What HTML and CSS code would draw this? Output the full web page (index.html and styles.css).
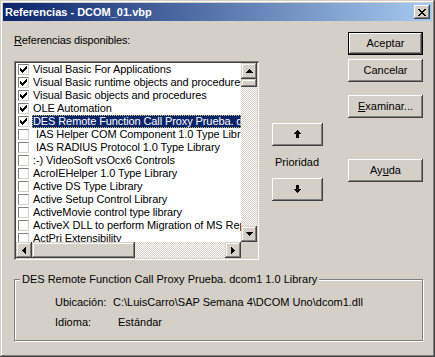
FILE: index.html
```html
<!DOCTYPE html>
<html>
<head>
<meta charset="utf-8">
<link rel="stylesheet" href="styles.css">
</head>
<body>
<div class="window">
  <div class="titlebar">
    <span class="title">Referencias - DCOM_01.vbp</span>
    <span class="close"><svg width="8" height="7" viewBox="0 0 8 7" shape-rendering="crispEdges"><path d="M0 0h2v1h-2zM6 0h2v1h-2zM1 1h2v1h-2zM5 1h2v1h-2zM2 2h4v1h-4zM3 3h2v1h-2zM2 4h4v1h-4zM1 5h2v1h-2zM5 5h2v1h-2zM0 6h2v1h-2zM6 6h2v1h-2z" fill="#000"/></svg></span>
  </div>
  <div class="body">
    <div class="main">
      <div class="left">
        <div class="label"><u>R</u>eferencias disponibles:</div>
        <div class="listbox">
          <div class="items">
            <div class="item"><span class="cb"><svg width="7" height="7" viewBox="0 0 7 7" shape-rendering="crispEdges"><path d="M6 0h1v3h-1zM5 1h1v3h-1zM4 2h1v3h-1zM0 2h1v3h-1zM1 3h1v3h-1zM2 4h1v3h-1zM3 3h1v3h-1z" fill="#000"/></svg></span><span class="txt">Visual Basic For Applications</span></div>
            <div class="item"><span class="cb"><svg width="7" height="7" viewBox="0 0 7 7" shape-rendering="crispEdges"><path d="M6 0h1v3h-1zM5 1h1v3h-1zM4 2h1v3h-1zM0 2h1v3h-1zM1 3h1v3h-1zM2 4h1v3h-1zM3 3h1v3h-1z" fill="#000"/></svg></span><span class="txt">Visual Basic runtime objects and procedures</span></div>
            <div class="item"><span class="cb"><svg width="7" height="7" viewBox="0 0 7 7" shape-rendering="crispEdges"><path d="M6 0h1v3h-1zM5 1h1v3h-1zM4 2h1v3h-1zM0 2h1v3h-1zM1 3h1v3h-1zM2 4h1v3h-1zM3 3h1v3h-1z" fill="#000"/></svg></span><span class="txt">Visual Basic objects and procedures</span></div>
            <div class="item"><span class="cb"><svg width="7" height="7" viewBox="0 0 7 7" shape-rendering="crispEdges"><path d="M6 0h1v3h-1zM5 1h1v3h-1zM4 2h1v3h-1zM0 2h1v3h-1zM1 3h1v3h-1zM2 4h1v3h-1zM3 3h1v3h-1z" fill="#000"/></svg></span><span class="txt">OLE Automation</span></div>
            <div class="item sel"><span class="cb"><svg width="7" height="7" viewBox="0 0 7 7" shape-rendering="crispEdges"><path d="M6 0h1v3h-1zM5 1h1v3h-1zM4 2h1v3h-1zM0 2h1v3h-1zM1 3h1v3h-1zM2 4h1v3h-1zM3 3h1v3h-1z" fill="#000"/></svg></span><span class="txt">DES Remote Function Call Proxy Prueba. dcom1 1.0 Library</span></div>
            <div class="item"><span class="cb"></span><span class="txt"> IAS Helper COM Component 1.0 Type Library</span></div>
            <div class="item"><span class="cb"></span><span class="txt"> IAS RADIUS Protocol 1.0 Type Library</span></div>
            <div class="item"><span class="cb"></span><span class="txt">:-) VideoSoft vsOcx6 Controls</span></div>
            <div class="item"><span class="cb"></span><span class="txt">AcroIEHelper 1.0 Type Library</span></div>
            <div class="item"><span class="cb"></span><span class="txt">Active DS Type Library</span></div>
            <div class="item"><span class="cb"></span><span class="txt">Active Setup Control Library</span></div>
            <div class="item"><span class="cb"></span><span class="txt">ActiveMovie control type library</span></div>
            <div class="item"><span class="cb"></span><span class="txt">ActiveX DLL to perform Migration of MS Repository</span></div>
            <div class="item"><span class="cb"></span><span class="txt">ActPri Extensibility</span></div>
            <div class="item"><span class="cb"></span><span class="txt">Adobe Acrobat Browser Control Type Library</span></div>
          </div>
          <div class="vscroll">
            <div class="sbtn"><svg width="7" height="4" viewBox="0 0 7 4" shape-rendering="crispEdges"><path d="M3 0h1v1h-1zM2 1h3v1h-3zM1 2h5v1h-5zM0 3h7v1h-7z" fill="#000"/></svg></div>
            <div class="vthumb"></div>
            <div class="track"></div>
            <div class="sbtn"><svg width="7" height="4" viewBox="0 0 7 4" shape-rendering="crispEdges"><path d="M0 0h7v1h-7zM1 1h5v1h-5zM2 2h3v1h-3zM3 3h1v1h-1z" fill="#000"/></svg></div>
          </div>
          <div class="hscroll">
            <div class="sbtn"><svg width="4" height="7" viewBox="0 0 4 7" shape-rendering="crispEdges"><path d="M0 3h1v1h-1zM1 2h1v3h-1zM2 1h1v5h-1zM3 0h1v7h-1z" fill="#000"/></svg></div>
            <div class="hthumb"></div>
            <div class="track"></div>
            <div class="sbtn"><svg width="4" height="7" viewBox="0 0 4 7" shape-rendering="crispEdges"><path d="M0 0h1v7h-1zM1 1h1v5h-1zM2 2h1v3h-1zM3 3h1v1h-1z" fill="#000"/></svg></div>
          </div>
          <div class="corner"></div>
        </div>
      </div>
      <div class="mid">
        <div class="btn arrowbtn"><svg width="7" height="8" viewBox="0 0 7 8" shape-rendering="crispEdges"><path d="M3 0h1v1h-1zM2 1h3v1h-3zM1 2h5v1h-5zM0 3h7v1h-7zM2 4h3v4h-3z" fill="#000"/></svg></div>
        <div class="prio">Prioridad</div>
        <div class="btn arrowbtn"><svg width="7" height="8" viewBox="0 0 7 8" shape-rendering="crispEdges"><path d="M2 0h3v4h-3zM0 4h7v1h-7zM1 5h5v1h-5zM2 6h3v1h-3zM3 7h1v1h-1z" fill="#000"/></svg></div>
      </div>
      <div class="right">
        <div class="btn default"><span>Aceptar</span></div>
        <div class="btn b-cancel">Cancelar</div>
        <div class="btn b-exam"><u>E</u>xaminar...</div>
        <div class="btn b-help">Ay<u>u</u>da</div>
      </div>
    </div>
    <div class="group">
      <div class="legend">DES Remote Function Call Proxy Prueba. dcom1 1.0 Library</div>
      <div class="info">
        <span class="k">Ubicación:</span><span class="v">C:\LuisCarro\SAP Semana 4\DCOM Uno\dcom1.dll</span>
        <span class="k">Idioma:</span><span class="v v2">Estándar</span>
      </div>
    </div>
  </div>
</div>
</body>
</html>
```

FILE: styles.css
```css
* { box-sizing: border-box; }
html, body { margin: 0; padding: 0; background: #D4D0C8; }
body {
  font-family: "Liberation Sans", Arial, sans-serif;
  font-size: 11px;
  line-height: 13px;
  color: #000;
}
.window {
  width: 435px;
  height: 357px;
  background: #D4D0C8;
  padding: 3px;
  box-shadow: inset -1px -1px 0 #404040, inset 1px 1px 0 #D4D0C8,
              inset -2px -2px 0 #808080, inset 2px 2px 0 #ffffff;
}
.titlebar {
  height: 18px;
  display: flex;
  align-items: center;
  justify-content: space-between;
  padding: 0 2px 0 2px;
  background: linear-gradient(to right, #0A246A, #A6CAF0);
}
.title {
  color: #fff;
  font-weight: bold;
  font-size: 11px;
  line-height: 13px;
}
.close {
  width: 16px;
  height: 14px;
  display: flex;
  align-items: center;
  justify-content: center;
  background: #D4D0C8;
  box-shadow: inset -1px -1px 0 #404040, inset 1px 1px 0 #fff,
              inset -2px -2px 0 #808080;
  padding-right: 1px;
}
.close svg { display: block; }
.body { padding: 0 0 0 11px; }
.main { display: flex; }
.left { width: 245px; }
.label { margin-top: 13px; line-height: 13px; letter-spacing: -0.15px; }
.listbox {
  margin-top: 14px;
  width: 245px;
  height: 199px;
  padding: 2px;
  background: #fff;
  box-shadow: inset 1px 1px 0 #808080, inset -1px -1px 0 #fff,
              inset 2px 2px 0 #404040, inset -2px -2px 0 #D4D0C8;
  display: grid;
  grid-template-columns: 225px 16px;
  grid-template-rows: 179px 16px;
}
.items {
  overflow: hidden;
  white-space: nowrap;
  padding-top: 0;
}
.item {
  height: 13px;
  display: flex;
  align-items: center;
  line-height: 13px;
}
.cb {
  width: 11px;
  height: 11px;
  margin-left: 2px;
  flex: none;
  background: #fff;
  border: 1px solid;
  border-color: #808080 #D4D0C8 #D4D0C8 #808080;
  display: flex;
  align-items: center;
  justify-content: center;
}
.cb svg { display: block; }
.txt {
  margin-left: 3px;
  padding-left: 1px;
  flex: 1;
  min-width: 0;
  height: 13px;
  overflow: hidden;
  white-space: pre;
  letter-spacing: -0.1px;
}
.item.sel .txt {
  background: #0A246A;
  color: #fff;
  outline: 1px dotted #C8C070;
  outline-offset: -1px;
}
.vscroll {
  display: flex;
  flex-direction: column;
}
.hscroll {
  display: flex;
}
.sbtn {
  width: 16px;
  height: 16px;
  flex: none;
  display: flex;
  align-items: center;
  justify-content: center;
  background: #D4D0C8;
  box-shadow: inset -1px -1px 0 #404040, inset 1px 1px 0 #D4D0C8,
              inset -2px -2px 0 #808080, inset 2px 2px 0 #fff;
}
.sbtn svg { display: block; }
.vthumb, .hthumb {
  flex: none;
  background: #D4D0C8;
  box-shadow: inset -1px -1px 0 #404040, inset 1px 1px 0 #D4D0C8,
              inset -2px -2px 0 #808080, inset 2px 2px 0 #fff;
}
.vthumb { height: 8px; }
.hthumb { width: 103px; }
.track {
  flex: 1;
  background: repeating-conic-gradient(#ffffff 0 25%, #D4D0C8 0 50%) 0 0 / 2px 2px;
}
.corner { background: #D4D0C8; }

.btn {
  height: 23px;
  display: flex;
  align-items: center;
  justify-content: center;
  background: #D4D0C8;
  box-shadow: inset -1px -1px 0 #404040, inset 1px 1px 0 #fff,
              inset -2px -2px 0 #808080, inset 2px 2px 0 #D4D0C8;
  line-height: 13px;
  padding-bottom: 1px;
}
.mid {
  width: 51px;
  margin-left: 13px;
  display: flex;
  flex-direction: column;
}
.arrowbtn svg { display: block; }
.arrowbtn:first-child { margin-top: 102px; }
.prio {
  margin-top: 10px;
  line-height: 13px;
  text-align: center;
  padding-right: 1px;
}
.prio + .arrowbtn { margin-top: 9px; }
.right {
  width: 75px;
  margin-left: 25px;
  display: flex;
  flex-direction: column;
}
.btn.default {
  margin-top: 11px;
  border: 1px solid #000;
  box-shadow: inset -1px -1px 0 #404040, inset 1px 1px 0 #fff,
              inset -2px -2px 0 #808080;
}
.b-cancel { margin-top: 4px; }
.b-exam { margin-top: 13px; }
.b-help { margin-top: 41px; }

.group {
  margin-top: 19px;
  width: 409px;
  height: 62px;
  border: 1px solid #808080;
  box-shadow: 1px 1px 0 #fff, inset 1px 1px 0 #fff;
}
.legend {
  width: max-content;
  margin-top: -7px;
  margin-left: 5px;
  padding: 0 2px;
  line-height: 13px;
  background: #D4D0C8;
}
.info {
  margin-top: 10px;
  padding-left: 40px;
  display: grid;
  grid-template-columns: 58px auto;
  row-gap: 7px;
  line-height: 13px;
}
.v2 { padding-left: 5px; }
```
